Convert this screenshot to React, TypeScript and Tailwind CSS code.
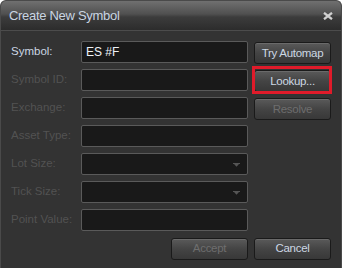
import React from "react";

const font = "font-['Liberation_Sans',Arial,sans-serif]";

const Caret = () => (
  <svg width="7" height="4" viewBox="0 0 7 4" className="absolute right-[7px] top-[9px]">
    <rect x="0" y="0" width="7" height="1" fill="#555" />
    <path d="M1 1 L6 1 L3.5 3.8 Z" fill="#555" />
  </svg>
);

const Btn: React.FC<{ label: string; disabled?: boolean }> = ({ label, disabled }) => (
  <button
    className={`w-[77px] h-[22px] rounded-[3px] border border-[#1a1a1a] bg-[linear-gradient(to_bottom,#5a5a5a,#444_50%,#383838)] text-[11.5px] tracking-[-0.3px] shadow-[inset_0_1px_0_#6a6a6a] ${
      disabled ? "text-[#6e6e6e]" : "text-[#cdd8e4]"
    }`}
  >
    {label}
  </button>
);

const Row: React.FC<{
  label: string;
  enabled?: boolean;
  value?: string;
  caret?: boolean;
  right?: React.ReactNode;
}> = ({ label, enabled, value, caret, right }) => (
  <div className="flex items-center h-[22px]">
    <span className={`w-[70px] text-[11.5px] ${enabled ? "text-[#cbd6e3]" : "text-[#525252]"}`}>{label}</span>
    <div className="relative w-[167px] h-[22px] rounded-[2px] border border-[#5a5a5a] bg-[#191919] text-[12px] text-[#eef2f7] pl-[4px] leading-[20px]">
      {value}
      {caret && <Caret />}
    </div>
    {right && <div className="ml-[6px]">{right}</div>}
  </div>
);

export default function App() {
  return (
    <div className={`${font} w-[342px] h-[268px] overflow-hidden bg-[#333] flex flex-col rounded-t-[6px] border-x border-t border-[#4a4a4a]`}>
      <div className="h-[30px] flex items-center justify-between px-[8px] bg-[linear-gradient(to_bottom,#707070,#505050_45%,#3c3c3c_55%,#2c2c2c)] border-b border-[#4c4c4c]">
        <span className="text-[13px] tracking-[-0.3px] text-[#c9d5e2]">Create New Symbol</span>
        <svg width="10" height="8" viewBox="0 0 10 8">
          <path d="M1 0.8 L9 7.2 M9 0.8 L1 7.2" stroke="#d0d0d0" strokeWidth="2.3" />
        </svg>
      </div>
      <div className="flex flex-col gap-[6px] pt-[10px] pl-[10px]">
        <Row label="Symbol:" enabled value="ES #F" right={<Btn label="Try Automap" />} />
        <Row
          label="Symbol ID:"
          right={
            <div className="relative">
              <Btn label="Lookup..." />
              <div className="absolute left-[-2px] top-[-2px] w-[80px] h-[28px] border-[3px] border-[#e01b2a]" />
            </div>
          }
        />
        <Row label="Exchange:" right={<Btn label="Resolve" disabled />} />
        <Row label="Asset Type:" />
        <Row label="Lot Size:" caret />
        <Row label="Tick Size:" caret />
        <Row label="Point Value:" />
        <div className="flex justify-end gap-[6px] pr-[10px] mt-[1px]">
          <Btn label="Accept" disabled />
          <Btn label="Cancel" />
        </div>
      </div>
    </div>
  );
}
